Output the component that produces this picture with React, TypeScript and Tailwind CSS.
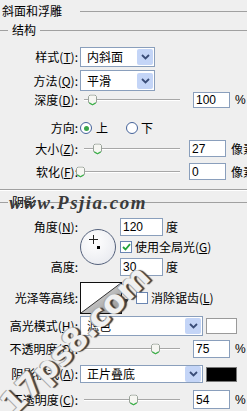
import React from 'react';

const cjk = "font-['SimSun','Noto_Sans_CJK_SC',sans-serif]";
const num = "font-['Liberation_Sans',sans-serif]";

const Label = ({ text, k, w = 78 }: { text: string; k?: string; w?: number }) => (
  <div className="shrink-0 text-right whitespace-nowrap leading-none" style={{ width: w }}>
    {text}
    {k && (
      <>
        (<span className="underline">{k}</span>)
      </>
    )}
    :
  </div>
);

const Field = ({ value, w = 37, h = 17 }: { value: string; w?: number; h?: number }) => (
  <div
    className={`bg-white border border-[#8a9fbc] flex items-center pl-[2px] text-[12px] ${num}`}
    style={{ width: w, height: h }}
  >
    {value}
  </div>
);

const Select = ({ value, w }: { value: string; w: number }) => (
  <div className="h-full bg-white border border-[#8a9fbc] flex items-center pl-[6px]" style={{ width: w }}>
    <span className="flex-1">{value}</span>
    <div className="w-[16px] h-[16px] mr-[1px] bg-[#c4d5f7] rounded-[2px] flex items-center justify-center">
      <svg width="9" height="6" viewBox="0 0 9 6">
        <path d="M1 1l3.5 3.5L8 1" stroke="#3a4d78" strokeWidth="1.8" fill="none" />
      </svg>
    </div>
  </div>
);

const Slider = ({ at }: { at: number }) => (
  <div className="relative w-[104px] h-full flex items-center">
    <div className="ml-[4px] w-[96px] border-t border-[#a7a7a7] border-b border-b-white" />
    <div className="absolute top-1/2 -translate-y-1/2" style={{ left: at - 80 - 4 }}>
      <svg width="9" height="11" viewBox="0 0 9 11">
        <path d="M2 .5h5l1.5 1.5v6L4.5 10.5.5 8V2z" fill="#f6f6f2" stroke="#9aa39a" />
        <path d="M1.2 8.3l3.3 2 3.3-2" stroke="#3cb44a" strokeWidth="1.2" fill="none" />
      </svg>
    </div>
  </div>
);

const Group = ({ text }: { text: string }) => (
  <div className="flex items-center h-[16px]">
    <div className="w-[8px] border-t border-[#a0a0a0]" />
    <span className="px-[4px] leading-none">{text}</span>
    <div className="flex-1 border-t border-[#a0a0a0]" />
  </div>
);

const Check = ({ on }: { on: boolean }) => (
  <div className="w-[12px] h-[12px] bg-white border border-[#6a86b2] flex items-center justify-center">
    {on && (
      <svg width="9" height="8" viewBox="0 0 9 8">
        <path d="M1 4l2.5 2.5L8 1.2" stroke="#22a33a" strokeWidth="1.8" fill="none" />
      </svg>
    )}
  </div>
);

const Radio = ({ on }: { on: boolean }) => (
  <div className="w-[12px] h-[12px] rounded-full bg-white border border-[#45639a] flex items-center justify-center">
    {on && <div className="w-[5px] h-[5px] rounded-full bg-[#3aa54a]" />}
  </div>
);

export default function App() {
  return (
    <div className={`relative w-[247px] h-[411px] overflow-hidden bg-[#efefef] text-[12px] text-black ${cjk}`}>
      {/* title */}
      <div className="flex items-center h-[22px]">
        <span className="pl-[2px] pr-[18px] leading-none">斜面和浮雕</span>
        <div className="flex-1 border-t border-[#a0a0a0]" />
      </div>
      <Group text="结构" />

      <div className="mt-[9px] flex items-center h-[20px] gap-[2px]">
        <Label text="样式" k="T" />
        <Select value="内斜面" w={75} />
      </div>
      <div className="mt-[3px] flex items-center h-[21px] gap-[2px]">
        <Label text="方法" k="Q" />
        <Select value="平滑" w={75} />
      </div>
      <div className="mt-[1px] flex items-center h-[16px] gap-[2px]">
        <Label text="深度" k="D" />
        <Slider at={92} />
        <div className="ml-[7px]"><Field value="100" w={37} h={16} /></div>
        <span className={`ml-[3px] ${num}`}>%</span>
      </div>
      <div className="mt-[10px] flex items-center h-[20px] gap-[2px]">
        <Label text="方向" />
        <Radio on />
        <span className="ml-[2px]">上</span>
        <div className="ml-[16px]"><Radio on={false} /></div>
        <span className="ml-[1px]">下</span>
      </div>
      <div className="mt-[2px] flex items-center h-[17px] gap-[2px]">
        <Label text="大小" k="Z" />
        <Slider at={97} />
        <div className="ml-[7px]"><Field value="27" /></div>
        <span className="ml-[3px] whitespace-nowrap">像素</span>
      </div>
      <div className="mt-[6px] flex items-center h-[17px] gap-[2px]">
        <Label text="软化" k="F" />
        <Slider at={80} />
        <div className="ml-[7px]"><Field value="0" /></div>
        <span className="ml-[3px] whitespace-nowrap">像素</span>
      </div>

      <div className="mt-[9px] border-t border-[#a0a0a0] border-b border-b-white" />
      <div className="mt-[3px]">
        <Group text="阴影" />
      </div>

      {/* angle block */}
      <div className="mt-[8px] flex h-[58px]">
        <div className="w-[78px] flex flex-col justify-between">
          <div className="h-[18px] flex items-center justify-end">
            <Label text="角度" k="N" />
          </div>
          <div className="h-[18px] flex items-center justify-end">
            <Label text="高度" />
          </div>
        </div>
        <div className="ml-[2px] w-[40px] flex items-center">
          <div className="relative w-[36px] h-[36px] rounded-full border-[1.5px] border-[#55627c] bg-[radial-gradient(circle_at_40%_35%,#ffffff,#e4e6ec)]">
            <div className="absolute left-[16px] top-[16px] w-[3px] h-[3px] bg-black" />
            <svg className="absolute left-[8px] top-[5px]" width="9" height="9" viewBox="0 0 9 9">
              <path d="M4.5 0v9M0 4.5h9" stroke="#222" strokeWidth="1" />
            </svg>
          </div>
        </div>
        <div className="flex flex-col">
          <div className="h-[18px] flex items-center">
            <Field value="120" w={43} h={18} />
            <span className="ml-[3px]">度</span>
          </div>
          <div className="h-[22px] flex items-center">
            <Check on />
            <span className="ml-[3px] whitespace-nowrap">使用全局光(<span className="underline">G</span>)</span>
          </div>
          <div className="h-[18px] flex items-center">
            <Field value="30" w={43} h={18} />
            <span className="ml-[3px]">度</span>
          </div>
        </div>
      </div>

      <div className="mt-[6px] flex items-center h-[32px] gap-[2px]">
        <Label text="光泽等高线" />
        <svg width="42" height="32" viewBox="0 0 42 32">
          <defs>
            <linearGradient id="cg" x1="0" y1="0" x2="1" y2="1">
              <stop offset="0" stopColor="#f4f4f4" />
              <stop offset="1" stopColor="#8e8e8e" />
            </linearGradient>
          </defs>
          <rect x="0.5" y="0.5" width="41" height="31" fill="#fff" stroke="#111" />
          <path d="M1 31L41 1V31z" fill="url(#cg)" />
          <path d="M1 31L41 1" stroke="#333" strokeWidth="1" />
          <rect x="0.5" y="0.5" width="41" height="31" fill="none" stroke="#111" />
        </svg>
        <svg width="5" height="4" viewBox="0 0 5 4" className="mt-[6px]">
          <path d="M0 0h5L2.5 4z" fill="#333" />
        </svg>
        <div className="ml-[5px]"><Check on={false} /></div>
        <span className="ml-[1px] whitespace-nowrap">消除锯齿(<span className="underline">L</span>)</span>
      </div>

      <div className="mt-[2px] flex items-center h-[20px] gap-[2px]">
        <Label text="高光模式" k="H" />
        <Select value="滤色" w={123} />
        <div className="ml-[1px] w-[31px] h-[16px] bg-white border border-[#9a9a9a]" />
      </div>
      <div className="mt-[4px] flex items-center h-[18px] gap-[2px]">
        <Label text="不透明度" k="O" />
        <Slider at={155} />
        <div className="ml-[7px]"><Field value="75" h={18} /></div>
        <span className={`ml-[3px] ${num}`}>%</span>
      </div>
      <div className="mt-[7px] flex items-center h-[18px] gap-[2px]">
        <Label text="阴影模式" k="A" />
        <Select value="正片叠底" w={123} />
        <div className="ml-[1px] w-[31px] h-[15px] bg-black border border-[#777]" />
      </div>
      <div className="mt-[7px] flex items-center h-[19px] gap-[2px]">
        <Label text="不透明度" k="C" />
        <Slider at={133} />
        <div className="ml-[7px]"><Field value="54" h={19} /></div>
        <span className={`ml-[3px] ${num}`}>%</span>
      </div>

      {/* watermarks */}
      <div className="absolute left-[9px] top-[193px] text-[19px] italic font-bold tracking-[1.5px] text-[#3a3a3a] font-['Liberation_Serif',serif] leading-none pointer-events-none">
        www.Psjia.com
      </div>
      <div className="absolute left-[-25px] top-[320px] w-[200px] h-[40px] flex items-center justify-center -rotate-[45deg] pointer-events-none">
        <span className="text-[32px] font-bold text-[#f0f0f0] font-['DejaVu_Sans',sans-serif] leading-none whitespace-nowrap [text-shadow:1px_1px_0_#555,-1px_-1px_0_#aaa,2px_2px_1px_#333]">
          17ps8.com
        </span>
      </div>
    </div>
  );
}
